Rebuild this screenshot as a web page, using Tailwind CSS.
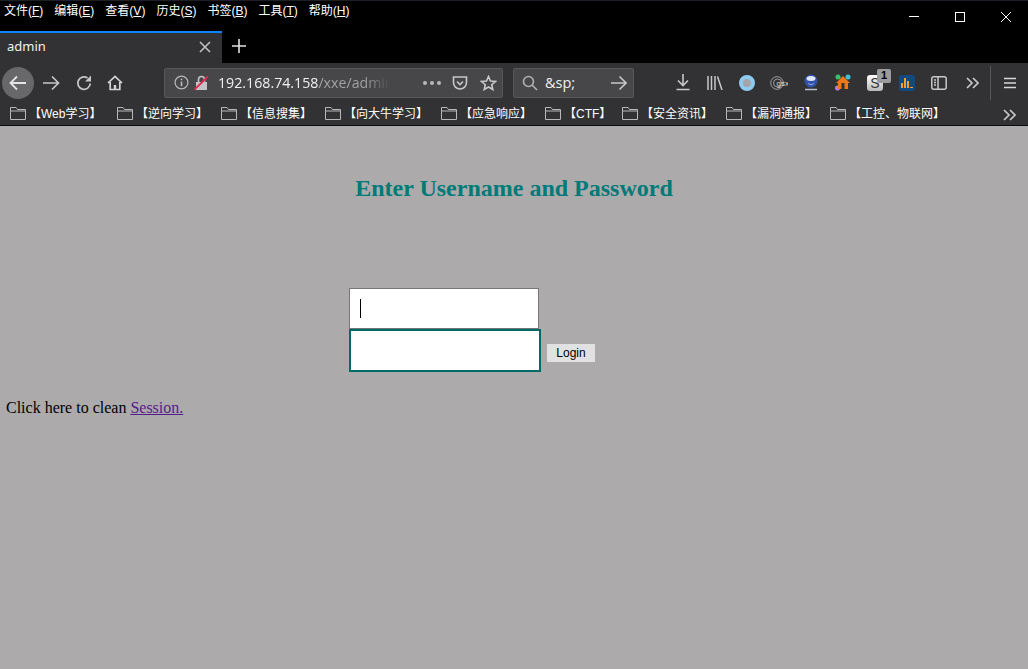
<!DOCTYPE html>
<html lang="zh-CN">
<head>
  <meta charset="UTF-8">
  <title>admin</title>
  <script src="https://cdn.jsdelivr.net/npm/@tailwindcss/browser@4"></script>
</head>
<body class="w-[1028px] h-[669px] overflow-hidden bg-[#adaaab] font-['Liberation_Serif',serif]">
  <!-- browser chrome -->
  <div class="h-[126px] font-['Noto_Sans','Noto_Sans_CJK_SC',sans-serif] text-white">
    <!-- menu bar -->
    <div class="h-[31px] bg-black flex justify-between border-t border-[#1c1f26]">
      <div class="flex text-[12px] leading-[20px] pl-[4px] gap-[11px] font-['Liberation_Sans','Noto_Sans_CJK_SC',sans-serif]">
        <span>文件(<u>F</u>)</span><span>编辑(<u>E</u>)</span><span>查看(<u>V</u>)</span><span>历史(<u>S</u>)</span><span>书签(<u>B</u>)</span><span>工具(<u>T</u>)</span><span>帮助(<u>H</u>)</span>
      </div>
      <div class="flex items-start -mr-px">
        <div class="w-[46px] h-[30px] flex justify-center pt-[15px]"><div class="w-[10px] h-px bg-white"></div></div>
        <div class="w-[46px] h-[30px] flex justify-center pt-[11px]"><div class="w-[10px] h-[10px] border border-white"></div></div>
        <div class="w-[46px] h-[30px] flex justify-center pt-[11px]">
          <svg width="10" height="10" viewBox="0 0 10 10" fill="none" stroke="#fff"><path d="M0 0L10 10M10 0L0 10"/></svg>
        </div>
      </div>
    </div>
    <!-- tab strip -->
    <div class="h-[32px] bg-black flex">
      <div class="w-[222px] bg-[#323234] border-t-2 border-[#0a84ff] flex items-center justify-between pl-[7px] pr-[11px] pb-[2px]">
        <span class="text-[13px] text-[#f0f0f0]">admin</span>
        <svg width="12" height="12" viewBox="0 0 12 12" fill="none" stroke="#c4c4c6" stroke-width="1.5"><path d="M1 1L11 11M11 1L1 11"/></svg>
      </div>
      <div class="w-[34px] flex items-center justify-center pb-[2px]">
        <svg width="14" height="14" viewBox="0 0 14 14" fill="none" stroke="#e2e2e3" stroke-width="1.6"><path d="M7 0V14M0 7H14"/></svg>
      </div>
    </div>
    <!-- nav bar -->
    <div class="h-[39px] bg-[#323234] flex items-center">
      <div class="w-[32px] h-[32px] ml-[2px] rounded-full bg-[#68686a] flex items-center justify-center">
        <svg width="18" height="16" viewBox="0 0 18 16" fill="none" stroke="#e4e4e5" stroke-width="1.8"><path d="M17 8H2M8 1.5L1.5 8L8 14.5"/></svg>
      </div>
      <svg class="ml-[8px]" width="18" height="16" viewBox="0 0 18 16" fill="none" stroke="#c6c6c8" stroke-width="1.7"><path d="M1 8H16M10 1.5L16.5 8L10 14.5"/></svg>
      <svg class="ml-[16px]" width="16" height="16" viewBox="0 0 16 16" fill="none" stroke="#c6c6c8" stroke-width="1.8"><path d="M14.200 8.500A6.200 6.200 0 1 1 11.500 3"/><path d="M15 0.500V6.500H9Z" fill="#c6c6c8" stroke="none"/></svg>
      <svg class="ml-[15px]" width="16" height="16" viewBox="0 0 16 16" fill="none" stroke="#d4d4d6" stroke-width="1.7"><path d="M1 8L8 1.500L15 8M3.200 7V14.500H12.800V7"/><rect x="6.800" y="10" width="2.400" height="4.500" fill="#d4d4d6" stroke="none"/></svg>
      <!-- url bar -->
      <div class="ml-[41px] w-[339px] h-[30px] bg-[#474749] rounded-[2px] border border-[#58585a] flex items-center pl-[9px] pr-[5px]">
        <svg width="15" height="15" viewBox="0 0 15 15" fill="none" stroke="#b8b8ba" stroke-width="1.2"><circle cx="7.500" cy="7.500" r="6.400"/><path d="M7.500 6.500V11.200" stroke-width="1.6"/><path d="M7.500 3.600V5.200" stroke-width="1.6"/></svg>
        <svg class="ml-[5px]" width="15" height="16" viewBox="0 0 15 16"><path d="M2 7H13V15H2Z" fill="#c4c4c6"/><path d="M4.500 7V4.500A3 3 0 0 1 10.500 4.500V7" fill="none" stroke="#c4c4c6" stroke-width="1.6"/><path d="M0.500 14.500L14 1.500" stroke="#e22850" stroke-width="1.800"/></svg>
        <div class="ml-[9px] w-[172px] overflow-hidden whitespace-nowrap text-[14.2px] text-[#f1f1f1] font-['Open_Sans',sans-serif] [mask-image:linear-gradient(to_right,black_85%,transparent)]">192.168.74.158<span class="text-[#a2a2a4]">/xxe/admin</span></div>
        <div class="ml-auto flex items-center gap-[3px]">
          <span class="w-[4px] h-[4px] rounded-full bg-[#b8b8ba]"></span><span class="w-[4px] h-[4px] rounded-full bg-[#b8b8ba]"></span><span class="w-[4px] h-[4px] rounded-full bg-[#b8b8ba]"></span>
        </div>
        <svg class="ml-[11px]" width="16" height="16" viewBox="0 0 16 16" fill="none" stroke="#c8c8ca" stroke-width="1.600"><path d="M1.500 2H14.500V7.500A6.500 6.500 0 0 1 1.500 7.500Z"/><path d="M5 6.500L8 9.500L11 6.500"/></svg>
        <svg class="ml-[12px]" width="17" height="16" viewBox="0 0 17 16" fill="none" stroke="#c8c8ca" stroke-width="1.600"><path d="M8.500 1.500L10.500 6L15.500 6.500L11.700 9.700L12.800 14.500L8.500 12L4.200 14.500L5.300 9.700L1.500 6.500L6.500 6Z"/></svg>
      </div>
      <!-- search bar -->
      <div class="ml-[10px] w-[121px] h-[30px] bg-[#474749] rounded-[2px] border border-[#58585a] flex items-center pl-[8px] pr-[6px]">
        <svg width="16" height="16" viewBox="0 0 16 16" fill="none" stroke="#b0b0b2" stroke-width="1.600"><circle cx="6.500" cy="6.500" r="5"/><path d="M10 10L15 15"/></svg>
        <span class="ml-[7px] text-[14.5px] text-[#f1f1f1] font-['Open_Sans',sans-serif]">&amp;sp;</span>
        <svg class="ml-auto" width="17" height="16" viewBox="0 0 17 16" fill="none" stroke="#c6c6c8" stroke-width="1.600"><path d="M1 8H16M9.500 1.500L16 8L9.500 14.500"/></svg>
      </div>
      <!-- toolbar icons, 32px slots -->
      <div class="ml-[33px] flex items-center">
        <div class="w-[32px] flex justify-center">
          <svg width="14" height="17" viewBox="0 0 14 17" fill="none" stroke="#c8c8ca" stroke-width="1.600"><path d="M7 0V11M2 6.500L7 11.500L12 6.500M0.500 15.500H13.500"/></svg>
        </div>
        <div class="w-[32px] flex justify-center">
          <svg width="16" height="14" viewBox="0 0 16 14" fill="none" stroke="#c8c8ca" stroke-width="1.500"><path d="M1 0V14M4.500 0V14M8 0V14M10.500 0.500L15 14"/></svg>
        </div>
        <div class="w-[32px] flex justify-center">
          <div class="w-[16px] h-[16px] rounded-full bg-[#a3a5a8] border-[4px] border-[#8ecbf0]"></div>
        </div>
        <div class="w-[32px] flex justify-center">
          <svg width="18" height="14" viewBox="0 0 18 14" fill="none" stroke="#b8b8ba" stroke-width="0.8"><circle cx="7" cy="7" r="6.300"/><circle cx="7.500" cy="7" r="4"/><text x="6.500" y="10" fill="#d8d8da" stroke="none" font-size="8" font-family="Liberation Sans">gsx</text></svg>
        </div>
        <div class="w-[32px] flex justify-center">
          <svg width="16" height="18" viewBox="0 0 16 18"><circle cx="8" cy="7" r="6.500" fill="#2f52a8"/><ellipse cx="8" cy="4.500" rx="4.500" ry="2.500" fill="#dfe6f5"/><path d="M5 9.500Q8 12 11 9.500" fill="none" stroke="#8fa6e0"/><path d="M2 15.500H14" stroke="#b9c0d0" stroke-width="1.500"/></svg>
        </div>
        <div class="w-[32px] flex justify-center">
          <svg width="16" height="17" viewBox="0 0 16 17"><circle cx="3" cy="3" r="2.500" fill="#36c46b"/><circle cx="13" cy="3" r="2.500" fill="#3fc2d8"/><circle cx="2.500" cy="14" r="2.500" fill="#c07be0"/><path d="M8 2L15 9H13V15H3V9H1Z" fill="#ee7718"/><rect x="6.500" y="9" width="3" height="6" fill="#323234"/></svg>
        </div>
        <!-- badge icon -->
        <div class="w-[32px] flex justify-center">
          <div class="relative w-[16px] h-[16px] rounded-[3px] bg-linear-to-b from-white to-[#b8b8b8] text-[#333] text-[14px] leading-[16px] text-center font-['Liberation_Sans',sans-serif]">S
            <span class="absolute -top-[6px] left-[10px] w-[14px] h-[14px] rounded-[2px] bg-[#9b9b9b] text-black text-[11px] leading-[13px] font-bold">1</span>
          </div>
        </div>
        <div class="w-[32px] flex justify-center">
          <div class="w-[16px] h-[16px] rounded-[3px] bg-[#0f4a80] flex items-end justify-center gap-px pb-[3px]">
            <span class="w-[2px] h-[5px] bg-[#f0a030]"></span><span class="w-[2px] h-[10px] bg-[#f0a030]"></span><span class="w-[2px] h-[7px] bg-[#f0a030]"></span><span class="w-[3px] h-[1px] bg-[#f0a030]"></span>
          </div>
        </div>
        <div class="w-[32px] flex justify-center">
          <svg width="16" height="14" viewBox="0 0 16 14" fill="none" stroke="#c8c8ca" stroke-width="1.500"><rect x="0.800" y="0.800" width="14.400" height="12.400" rx="2"/><path d="M7 1V13M3 4H5M3 6.500H5M3 9H5"/></svg>
        </div>
        <div class="ml-px w-[32px] flex justify-center">
          <svg width="13" height="12" viewBox="0 0 13 12" fill="none" stroke="#c8c8ca" stroke-width="1.700"><path d="M1 1L6 6L1 11M7 1L12 6L7 11"/></svg>
        </div>
      </div>
      <div class="ml-[2px] w-px h-[34px] bg-[#57575a]"></div>
      <svg class="ml-[13px]" width="12" height="12" viewBox="0 0 12 12" fill="none" stroke="#d8d8da" stroke-width="1.600"><path d="M0 1.500H12M0 6H12M0 10.500H12"/></svg>
    </div>
    <!-- bookmarks bar -->
    <div class="h-[24px] bg-[#323234] border-b border-[#0c0c0d] flex items-center pl-[10px] text-[12px] text-white font-['Liberation_Sans','Noto_Sans_CJK_SC',sans-serif] whitespace-nowrap relative">
      <div class="flex items-center w-[107px]"><svg width="16" height="13" viewBox="0 0 16 13" fill="none" stroke="#b8b8ba"><path d="M0.500 12.500V0.500H6L7.500 2.500H15.500V12.500ZM0.500 4H15.500"/></svg><span class="ml-[3px]">【Web学习】</span></div>
      <div class="flex items-center w-[104px]"><svg width="16" height="13" viewBox="0 0 16 13" fill="none" stroke="#b8b8ba"><path d="M0.500 12.500V0.500H6L7.500 2.500H15.500V12.500ZM0.500 4H15.500"/></svg><span class="ml-[3px]">【逆向学习】</span></div>
      <div class="flex items-center w-[104px]"><svg width="16" height="13" viewBox="0 0 16 13" fill="none" stroke="#b8b8ba"><path d="M0.500 12.500V0.500H6L7.500 2.500H15.500V12.500ZM0.500 4H15.500"/></svg><span class="ml-[3px]">【信息搜集】</span></div>
      <div class="flex items-center w-[116px]"><svg width="16" height="13" viewBox="0 0 16 13" fill="none" stroke="#b8b8ba"><path d="M0.500 12.500V0.500H6L7.500 2.500H15.500V12.500ZM0.500 4H15.500"/></svg><span class="ml-[3px]">【向大牛学习】</span></div>
      <div class="flex items-center w-[104px]"><svg width="16" height="13" viewBox="0 0 16 13" fill="none" stroke="#b8b8ba"><path d="M0.500 12.500V0.500H6L7.500 2.500H15.500V12.500ZM0.500 4H15.500"/></svg><span class="ml-[3px]">【应急响应】</span></div>
      <div class="flex items-center w-[77px]"><svg width="16" height="13" viewBox="0 0 16 13" fill="none" stroke="#b8b8ba"><path d="M0.500 12.500V0.500H6L7.500 2.500H15.500V12.500ZM0.500 4H15.500"/></svg><span class="ml-[3px]">【CTF】</span></div>
      <div class="flex items-center w-[104px]"><svg width="16" height="13" viewBox="0 0 16 13" fill="none" stroke="#b8b8ba"><path d="M0.500 12.500V0.500H6L7.500 2.500H15.500V12.500ZM0.500 4H15.500"/></svg><span class="ml-[3px]">【安全资讯】</span></div>
      <div class="flex items-center w-[104px]"><svg width="16" height="13" viewBox="0 0 16 13" fill="none" stroke="#b8b8ba"><path d="M0.500 12.500V0.500H6L7.500 2.500H15.500V12.500ZM0.500 4H15.500"/></svg><span class="ml-[3px]">【漏洞通报】</span></div>
      <div class="flex items-center"><svg width="16" height="13" viewBox="0 0 16 13" fill="none" stroke="#b8b8ba"><path d="M0.500 12.500V0.500H6L7.500 2.500H15.500V12.500ZM0.500 4H15.500"/></svg><span class="ml-[3px]">【工控、物联网】</span></div>
      <svg class="absolute right-[12px] top-[7px]" width="13" height="12" viewBox="0 0 13 12" fill="none" stroke="#c8c8ca" stroke-width="1.700"><path d="M1 1L6 6L1 11M7 1L12 6L7 11"/></svg>
    </div>
  </div>
  <!-- page -->
  <main class="text-black">
    <h1 class="pt-[48px] text-center text-[24px] leading-[28px] font-bold text-[#007a78]">Enter Username and Password</h1>
    <form class="pl-[349px] pt-[86px] flex flex-col items-start">
      <div class="w-[190px] h-[41px] bg-white border border-[#767676] flex items-center pl-[10px]"><div class="w-px h-[19px] bg-black"></div></div>
      <div class="flex items-end">
        <div class="w-[192px] h-[43px] bg-white border-2 border-[#006b66]"></div>
        <button type="button" class="ml-[6px] mb-[10px] w-[48px] h-[18px] bg-[#e1e1e1] text-[12px] leading-[18px] text-black font-['Liberation_Sans',sans-serif]">Login</button>
      </div>
    </form>
    <p class="pl-[6px] pt-[27px] text-[16px] leading-[18px]">Click here to clean <a href="#" class="underline text-[#551a8b]">Session.</a></p>
  </main>
</body>
</html>
